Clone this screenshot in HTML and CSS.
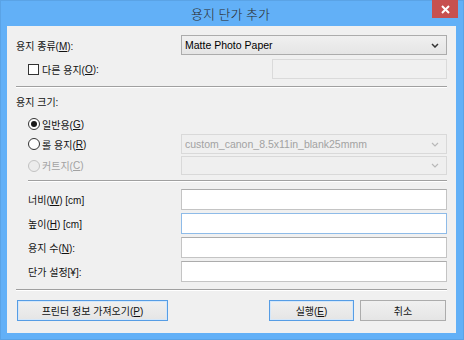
FILE: index.html
```html
<!DOCTYPE html>
<html lang="ko">
<head>
  <meta charset="UTF-8">
  <title>용지 단가 추가</title>
  <link rel="stylesheet" href="styles.css">
</head>
<body>
  <div class="window">
    <div class="titlebar">
      <span class="title">용지 단가 추가</span>
      <span class="close-btn">
        <svg width="9" height="9" viewBox="0 0 9 9"><path d="M1 1 L8 8 M8 1 L1 8" stroke="#ffffff" stroke-width="2"/></svg>
      </span>
    </div>
    <div class="client">
      <div class="row row-type">
        <span class="label">용지 종류(<u>M</u>):</span>
        <div class="combo">
          <span>Matte Photo Paper</span>
          <svg class="chev" width="8" height="5" viewBox="0 0 8 5"><path d="M1 1 L4 4 L7 1" fill="none" stroke="#333333" stroke-width="1.5"/></svg>
        </div>
      </div>
      <div class="row row-other indent">
        <label class="check"><span class="box"></span>다른 용지(<u>O</u>):</label>
        <div class="edit edit-disabled small"></div>
      </div>
      <div class="sep sep-1"></div>
      <div class="row row-size-label">
        <span class="label">용지 크기:</span>
      </div>
      <div class="row row-radio1 indent">
        <label class="radio"><span class="dot checked"></span>일반용(<u>G</u>)</label>
      </div>
      <div class="row row-radio2 indent">
        <label class="radio"><span class="dot"></span>롤 용지(<u>R</u>)</label>
        <div class="combo combo-disabled">
          <span>custom_canon_8.5x11in_blank25mmm</span>
          <svg class="chev" width="8" height="5" viewBox="0 0 8 5"><path d="M1 1 L4 4 L7 1" fill="none" stroke="#b8b8b8" stroke-width="1.2"/></svg>
        </div>
      </div>
      <div class="row row-radio3 indent">
        <label class="radio disabled"><span class="dot"></span>커트지(<u>C</u>)</label>
        <div class="combo combo-disabled">
          <span></span>
          <svg class="chev" width="8" height="5" viewBox="0 0 8 5"><path d="M1 1 L4 4 L7 1" fill="none" stroke="#b8b8b8" stroke-width="1.2"/></svg>
        </div>
      </div>
      <div class="sep sep-2"></div>
      <div class="row row-field first indent">
        <span class="label">너비(<u>W</u>) [cm]</span>
        <div class="edit"></div>
      </div>
      <div class="row row-field indent">
        <span class="label">높이(<u>H</u>) [cm]</span>
        <div class="edit focused"></div>
      </div>
      <div class="row row-field indent">
        <span class="label">용지 수(<u>N</u>):</span>
        <div class="edit"></div>
      </div>
      <div class="row row-field indent">
        <span class="label">단가 설정[¥]:</span>
        <div class="edit"></div>
      </div>
      <div class="sep sep-3"></div>
      <div class="buttons">
        <button class="btn btn-wide default">프린터 정보 가져오기(<u>P</u>)</button>
        <div class="btn-group">
          <button class="btn btn-ok default">실행(<u>E</u>)</button>
          <button class="btn btn-cancel">취소</button>
        </div>
      </div>
    </div>
  </div>
</body>
</html>
```
FILE: styles.css
```css
body {
  margin: 0;
  padding: 0;
  font-family: "Liberation Sans", "Noto Sans CJK KR", sans-serif;
  font-size: 10px;
  color: #111111;
}
.window {
  position: relative;
  width: 464px;
  height: 340px;
  box-sizing: border-box;
  background-color: #62b0f7;
  border: 1px solid #5aa3e6;
  padding: 0 7px 6px 6px;
  display: flex;
  flex-direction: column;
}
.titlebar {
  height: 25px;
  display: flex;
  align-items: center;
  justify-content: center;
}
.title {
  font-family: "Noto Sans CJK KR", sans-serif;
  font-size: 13px;
  font-weight: 300;
  color: #2b2b2b;
  margin-left: -2px;
}
.close-btn {
  position: absolute;
  top: -1px;
  right: 5px;
  width: 26px;
  height: 18px;
  background-color: #c75050;
  display: flex;
  align-items: center;
  justify-content: center;
}
.client {
  flex: 1;
  background-color: #f0f0f0;
  padding: 0 9px;
  display: flex;
  flex-direction: column;
}
.row {
  display: flex;
  align-items: center;
  justify-content: space-between;
  height: 20px;
}
.indent {
  padding-left: 12px;
}
.row-type { margin-top: 9px; }
.row-other { margin-top: 4px; }
.row-size-label { margin-top: 3px; }
.row-radio1 { margin-top: 3px; }
.row-radio2 { margin-top: 0; }
.row-radio3 { margin-top: 2px; height: 19px; }
.row-field { margin-top: 3px; height: 21px; }
.row-field.first { margin-top: 7px; }
.combo {
  width: 266px;
  height: 20px;
  box-sizing: border-box;
  border: 1px solid #acacac;
  background: linear-gradient(#f0f0f0, #e5e5e5);
  display: flex;
  align-items: center;
  justify-content: space-between;
  padding: 0 7px 0 3px;
  font-size: 10.5px;
  color: #000000;
}
.row-radio3 .combo {
  height: 19px;
}
.combo-disabled {
  background: #efefef;
  border-color: #d9d9d9;
  color: #a2a2a2;
}
.chev {
  flex-shrink: 0;
}
.edit {
  width: 266px;
  height: 21px;
  box-sizing: border-box;
  background-color: #ffffff;
  border: 1px solid #c4c4c4;
  border-top-color: #acacac;
}
.edit.focused {
  border-color: #8ebbe8;
}
.edit.small {
  width: 175px;
  height: 20px;
}
.edit-disabled {
  background-color: #f0f0f0;
  border-color: #dadada;
}
.check, .radio {
  display: flex;
  align-items: center;
}
.box {
  width: 11px;
  height: 11px;
  box-sizing: border-box;
  border: 1px solid #333333;
  background-color: #ffffff;
  margin-right: 3px;
}
.dot {
  width: 12px;
  height: 12px;
  box-sizing: border-box;
  border: 1px solid #333333;
  border-radius: 50%;
  background-color: #ffffff;
  margin-right: 2px;
  display: flex;
  align-items: center;
  justify-content: center;
}
.dot.checked::after {
  content: "";
  width: 6px;
  height: 6px;
  border-radius: 50%;
  background-color: #1a1a1a;
}
.radio.disabled {
  color: #a2a2a2;
}
.radio.disabled .dot {
  border-color: #c2c2c2;
  background-color: #ececec;
}
.sep {
  height: 1px;
  background-color: #a0a0a0;
  border-bottom: 1px solid #ffffff;
}
.sep-1 { margin-top: 7px; }
.sep-2 { margin-top: 5px; margin-left: 12px; }
.sep-3 { margin-top: 7px; }
.buttons {
  margin-top: 9px;
  padding: 0 1px;
  display: flex;
  justify-content: space-between;
}
.btn-group {
  display: flex;
  gap: 6px;
}
.btn {
  height: 21px;
  box-sizing: border-box;
  border: 1px solid #acacac;
  background: linear-gradient(#f0f0f0, #e5e5e5);
  font-family: "Liberation Sans", "Noto Sans CJK KR", sans-serif;
  font-size: 10px;
  color: #111111;
  padding: 0;
}
.btn.default {
  border-color: #569de5;
  box-shadow: inset 0 0 0 1px #d4e7fa;
}
.btn-wide { width: 151px; }
.btn-ok { width: 85px; }
.btn-cancel { width: 86px; }
```
